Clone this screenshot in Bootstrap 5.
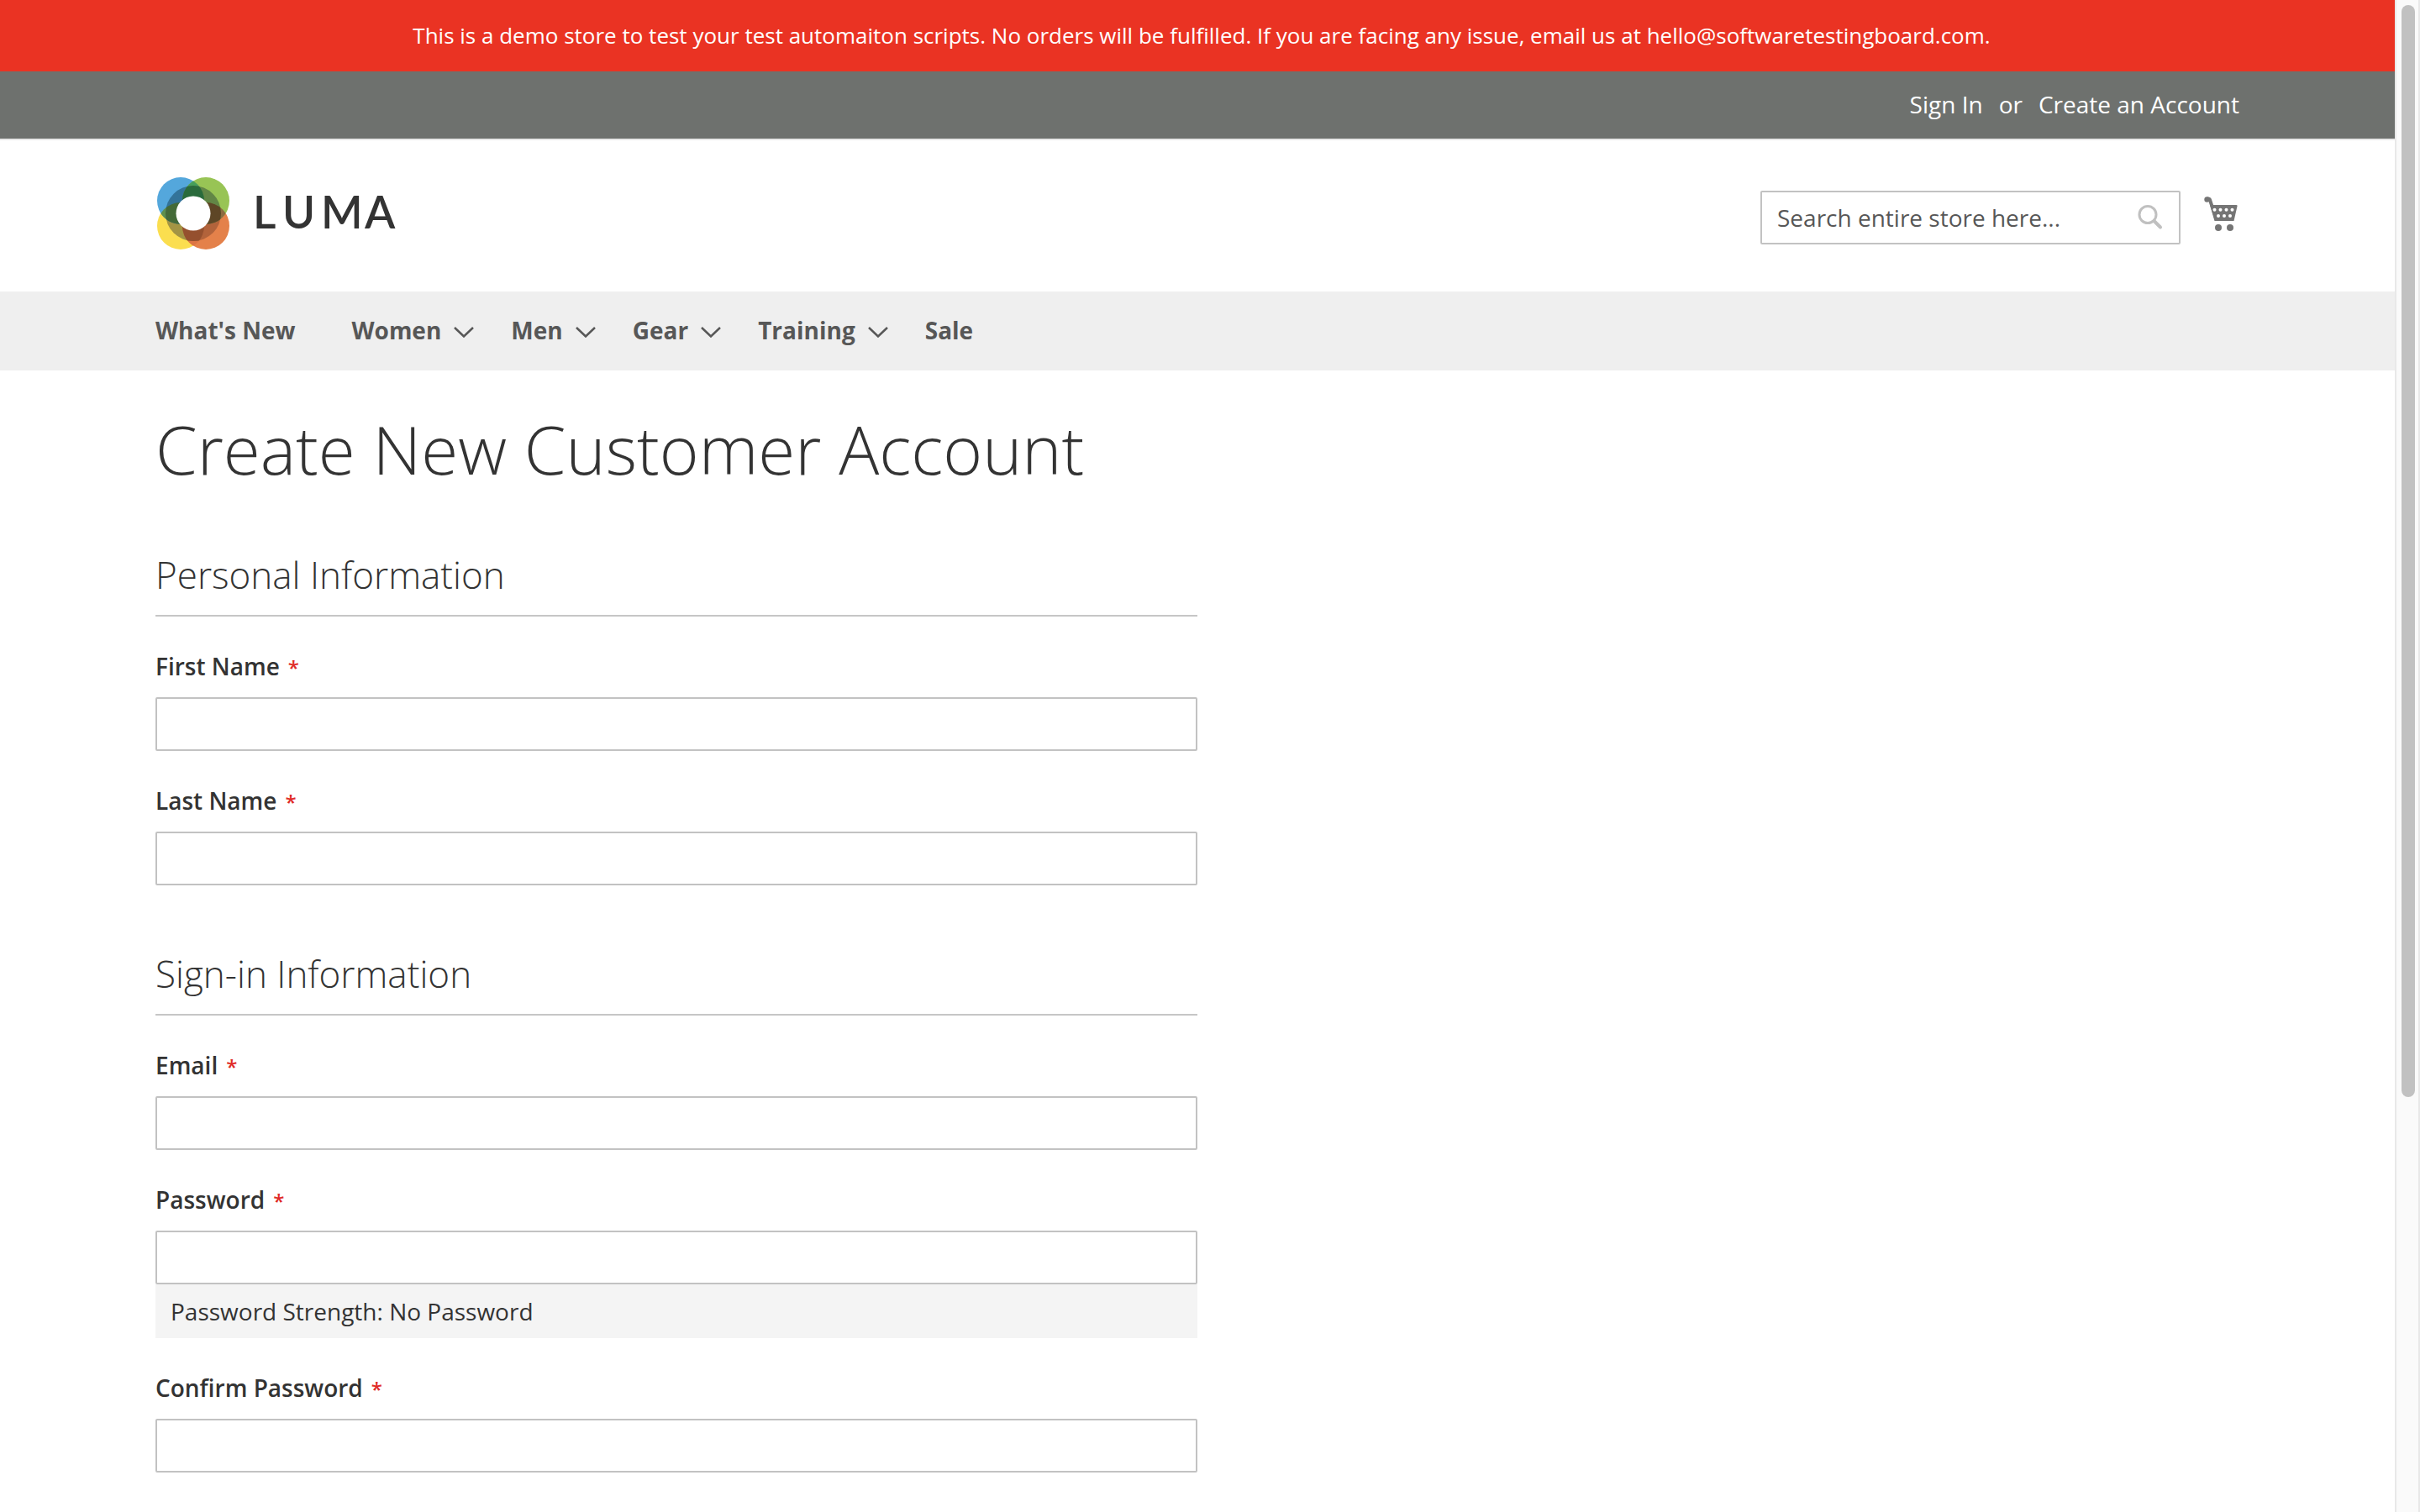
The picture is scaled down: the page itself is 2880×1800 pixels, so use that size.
<!DOCTYPE html>
<html lang="en">
<head>
<meta charset="utf-8">
<meta name="viewport" content="width=device-width, initial-scale=1">
<title>Create New Customer Account</title>
<link href="https://cdn.jsdelivr.net/npm/bootstrap@5.3.0/dist/css/bootstrap.min.css" rel="stylesheet">
<style>
  body { font-family: "Open Sans", "Noto Sans", sans-serif; font-size: 28px; line-height: 40px; color: #333; background: #fff; }
  .shell { max-width: 2560px; padding: 0 40px; }
  .notice { background: #ea3323; color: #fff; font-size: 26px; line-height: 85px; padding-left: 10px; }
  .topbar { background: #6e716e; border-bottom: 2px solid #e8e8e8; }
  .topbar-inner { padding-top: 19px; padding-bottom: 21px; gap: 19px; color: #fff; }
  .topbar a { color: #fff; text-decoration: none; }
  .masthead { padding-top: 44px; padding-bottom: 48px; }
  .brand-mark { width: 290px; height: 88px; }
  .brand-mark text { font-family: Lato, sans-serif; font-weight: 600; font-size: 53px; fill: #333; }
  .search-box { width: 500px; height: 64px; border: 2px solid #c2c2c2; border-radius: 2px; }
  .search-box .form-control { font-size: 28px; line-height: 40px; padding: 10px 0 10px 18px; border: 0; color: #333; box-shadow: none; }
  .search-box .form-control::placeholder { color: #575757; opacity: 1; }
  .search-box .btn { padding: 0 18px; border: 0; line-height: 0; }
  .header-tools { gap: 27px; }
  .sitenav { background: #efefef; padding: 26px 0 28px; }
  .sitenav .nav { gap: 44px; }
  .sitenav .nav-link { padding: 0; color: #575757; font-weight: 700; gap: 15px; }
  .sitenav .lead-item { padding-right: 23px; }
  .page-title { font-size: 80px; line-height: 90px; font-weight: 300; margin: 48px 0 0; color: #333; }
  .account-form { width: 50%; }
  .form-group-box { margin-top: 78px; }
  .group-title { font-size: 44px; line-height: 54px; font-weight: 300; padding-bottom: 21px; margin: 0; border-bottom: 2px solid #c6c6c6; float: none; }
  .field { padding-top: 39px; }
  .field .form-label { display: block; font-weight: 600; margin: 0 0 17px; }
  .field .req { color: #e02b27; font-size: 24px; margin-left: 10px; line-height: 1; }
  .field .form-control { height: 64px; border: 2px solid #c2c2c2; border-radius: 2px; font-size: 28px; padding: 0 16px; }
  .strength { background: #f4f4f4; line-height: 64px; padding: 0 18px; }
  .scroll-track { width: 30px; background: #fafafa; border: solid #e8e8e8; border-width: 0 2px; padding: 6px 4px 0 6px; }
  .scroll-thumb { width: 16px; height: 1300px; max-height: 73%; border-radius: 8px; background: #c1c1c1; }
</style>
<script src="https://cdn.jsdelivr.net/npm/bootstrap@5.3.0/dist/js/bootstrap.bundle.min.js"></script>
</head>
<body class="d-flex vh-100 overflow-hidden">
<div class="flex-grow-1 overflow-hidden">
  <div class="notice text-center">This is a demo store to test your test automaiton scripts. No orders will be fulfilled. If you are facing any issue, email us at hello@softwaretestingboard.com.</div>
  <header>
    <div class="topbar">
      <div class="shell topbar-inner container-fluid d-flex justify-content-end">
        <a href="#">Sign In</a><span>or</span><a href="#">Create an Account</a>
      </div>
    </div>
    <div class="shell masthead container-fluid d-flex justify-content-between align-items-start">
      <a href="#" class="d-block lh-1" aria-label="Luma">
        <svg class="brand-mark d-block" viewBox="185 211 290 88">
          <defs>
            <clipPath id="cBlue"><circle cx="215" cy="239" r="28"/></clipPath>
            <clipPath id="cGreen"><circle cx="245" cy="239" r="28"/></clipPath>
            <clipPath id="cYellow"><circle cx="215" cy="269" r="28"/></clipPath>
            <clipPath id="cRing"><circle cx="230" cy="254" r="33"/></clipPath>
          </defs>
          <circle cx="215" cy="269" r="28" fill="#fbde4f"/>
          <circle cx="245" cy="269" r="28" fill="#e4814a"/>
          <circle cx="215" cy="239" r="28" fill="#54a7dc"/>
          <circle cx="245" cy="239" r="28" fill="#98c455"/>
          <circle cx="245" cy="239" r="28" fill="#469f5b" clip-path="url(#cBlue)"/>
          <circle cx="215" cy="269" r="28" fill="#5d8f4d" clip-path="url(#cBlue)"/>
          <circle cx="245" cy="269" r="28" fill="#8c6b40" clip-path="url(#cGreen)"/>
          <circle cx="245" cy="269" r="28" fill="#dd7543" clip-path="url(#cYellow)"/>
          <g clip-path="url(#cRing)">
            <circle cx="215" cy="269" r="28" fill="#a39444"/>
            <circle cx="245" cy="269" r="28" fill="#b2633b"/>
            <circle cx="215" cy="239" r="28" fill="#337399"/>
            <circle cx="245" cy="239" r="28" fill="#628646"/>
            <circle cx="245" cy="239" r="28" fill="#2a6b3c" clip-path="url(#cBlue)"/>
            <circle cx="215" cy="269" r="28" fill="#446a38" clip-path="url(#cBlue)"/>
            <circle cx="245" cy="269" r="28" fill="#5e4626" clip-path="url(#cGreen)"/>
            <circle cx="245" cy="269" r="28" fill="#95502e" clip-path="url(#cYellow)"/>
          </g>
          <circle cx="230" cy="254" r="20.500" fill="#fff"/>
          <text y="272" x="301 336 382 434">LUMA</text>
        </svg>
      </a>
      <div class="header-tools d-flex align-items-start pt-3">
        <form class="search-box d-flex align-items-center" role="search">
          <input class="form-control bg-transparent" type="search" aria-label="Search" placeholder="Search entire store here...">
          <button class="btn" type="button" aria-label="Search">
            <svg width="32" height="32" viewBox="0 0 32 32" fill="none" stroke="#c0c0c0"><circle cx="13" cy="12.500" r="10" stroke-width="3"/><path d="M20.500 20l7.500 7.500" stroke-width="4" stroke-linecap="round"/></svg>
          </button>
        </form>
        <a href="#" class="d-block lh-1 pt-1" aria-label="My Cart">
          <svg class="d-block" width="43" height="46" viewBox="2622 231 43 46">
            <path d="M2626 236.500h2q1.500 0 2 1.500l7.500 23" stroke="#757575" stroke-width="4" fill="none"/><circle cx="2626.500" cy="237.500" r="3.200" fill="#757575"/>
            <path d="M2630 244h31.500q1.300 0 1 1.500L2658.500 263H2635.500z" fill="#757575"/>
            <g fill="#fff"><circle cx="2635.500" cy="249.700" r="2"/><circle cx="2642.500" cy="249.700" r="2"/><circle cx="2649.500" cy="249.700" r="2"/><circle cx="2656.500" cy="249.700" r="2"/><circle cx="2640" cy="257" r="2"/><circle cx="2647" cy="257" r="2"/><circle cx="2654" cy="257" r="2"/></g>
            <circle cx="2640" cy="271" r="4" fill="#757575"/><circle cx="2654" cy="271" r="4" fill="#757575"/>
          </svg>
        </a>
      </div>
    </div>
    <nav class="sitenav">
      <div class="shell container-fluid">
        <ul class="nav">
          <li class="nav-item lead-item"><a class="nav-link" href="#">What's New</a></li>
          <li class="nav-item"><a class="nav-link d-flex align-items-center" href="#">Women <svg width="24" height="18" viewBox="0 0 24 18" fill="none" stroke="#575757" stroke-width="2.500"><path d="M1 6l11 10.500L23 6"/></svg></a></li>
          <li class="nav-item"><a class="nav-link d-flex align-items-center" href="#">Men <svg width="24" height="18" viewBox="0 0 24 18" fill="none" stroke="#575757" stroke-width="2.500"><path d="M1 6l11 10.500L23 6"/></svg></a></li>
          <li class="nav-item"><a class="nav-link d-flex align-items-center" href="#">Gear <svg width="24" height="18" viewBox="0 0 24 18" fill="none" stroke="#575757" stroke-width="2.500"><path d="M1 6l11 10.500L23 6"/></svg></a></li>
          <li class="nav-item"><a class="nav-link d-flex align-items-center" href="#">Training <svg width="24" height="18" viewBox="0 0 24 18" fill="none" stroke="#575757" stroke-width="2.500"><path d="M1 6l11 10.500L23 6"/></svg></a></li>
          <li class="nav-item"><a class="nav-link" href="#">Sale</a></li>
        </ul>
      </div>
    </nav>
  </header>
  <main class="shell container-fluid">
    <h1 class="page-title">Create New Customer Account</h1>
    <form class="account-form">
      <fieldset class="form-group-box">
        <legend class="group-title">Personal Information</legend>
        <div class="field"><label class="form-label" for="first">First Name<span class="req">*</span></label><input class="form-control" id="first" type="text"></div>
        <div class="field"><label class="form-label" for="last">Last Name<span class="req">*</span></label><input class="form-control" id="last" type="text"></div>
      </fieldset>
      <fieldset class="form-group-box">
        <legend class="group-title">Sign-in Information</legend>
        <div class="field"><label class="form-label" for="email">Email<span class="req">*</span></label><input class="form-control" id="email" type="email"></div>
        <div class="field"><label class="form-label" for="pass">Password<span class="req">*</span></label><input class="form-control" id="pass" type="password"><div class="strength">Password Strength: No Password</div></div>
        <div class="field"><label class="form-label" for="confirm">Confirm Password<span class="req">*</span></label><input class="form-control" id="confirm" type="password"></div>
      </fieldset>
    </form>
  </main>
</div>
<div class="scroll-track flex-shrink-0" aria-hidden="true"><div class="scroll-thumb"></div></div>
</body>
</html>
